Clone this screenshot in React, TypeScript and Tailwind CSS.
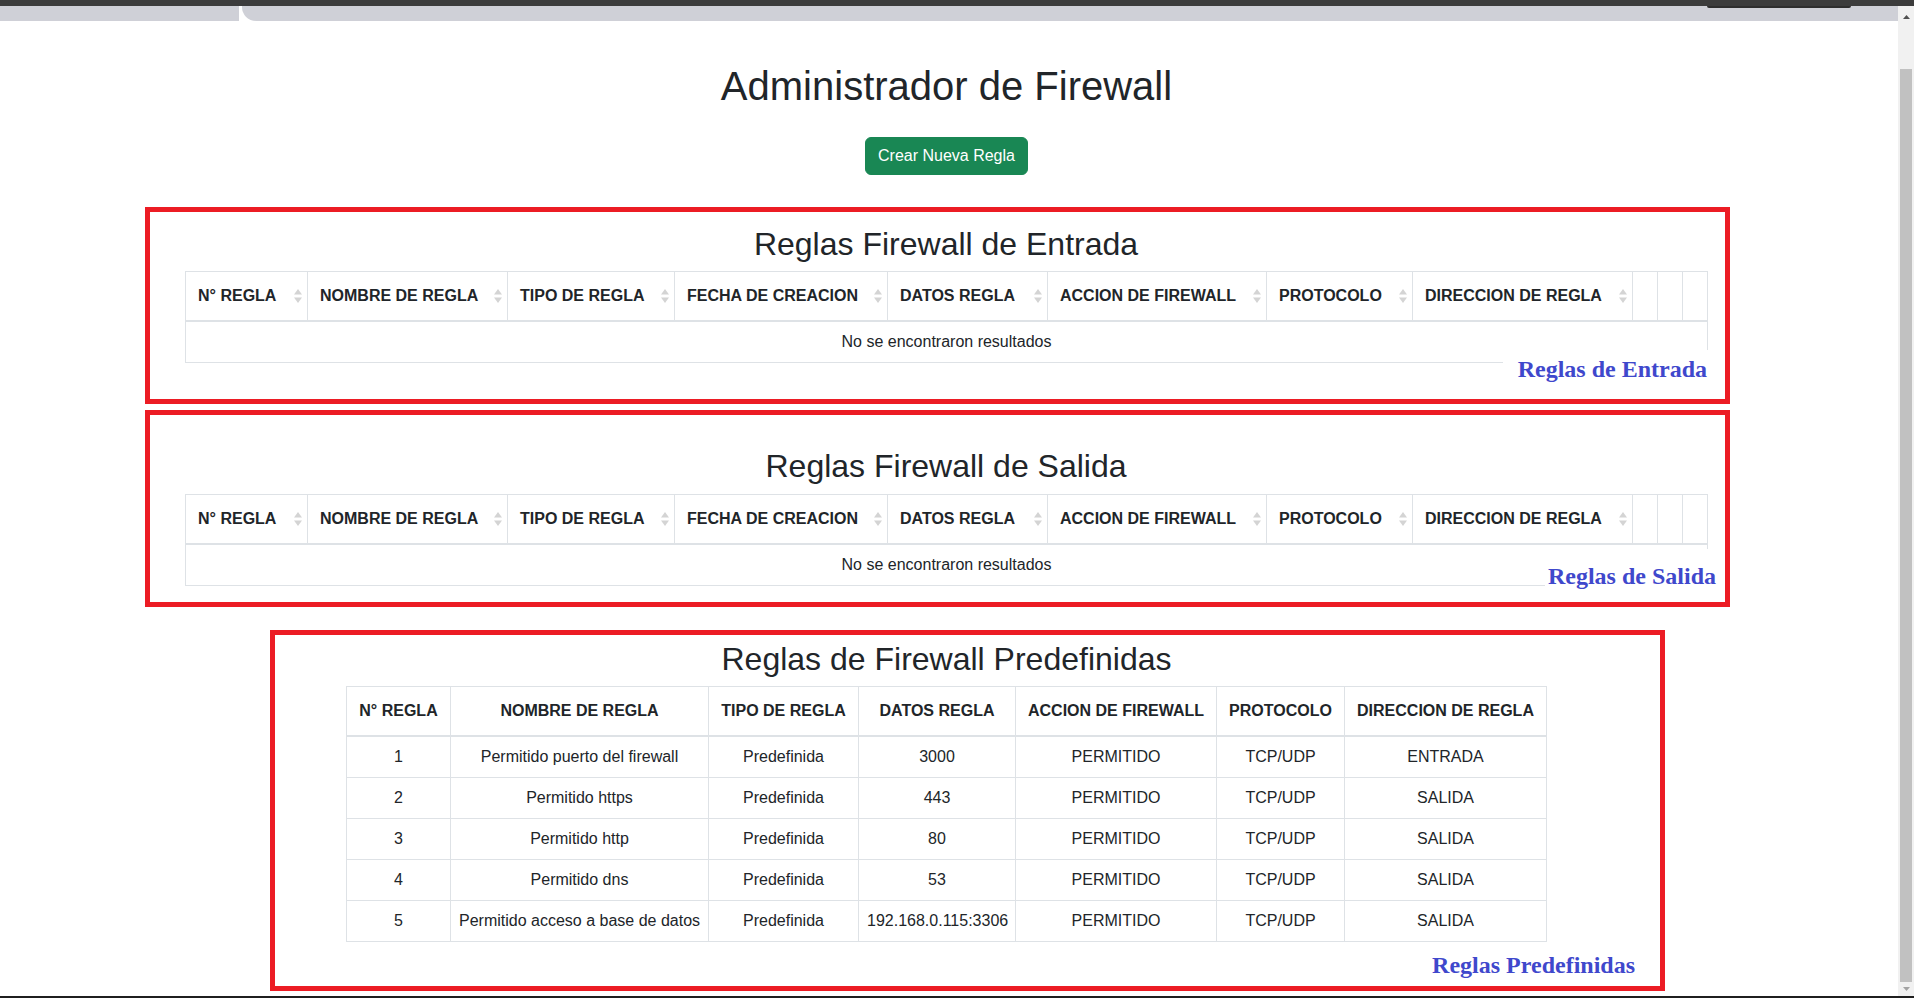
import React from "react";

const sortableHeaders = [
  { label: "N° REGLA", w: "w-[122px]" },
  { label: "NOMBRE DE REGLA", w: "w-[200px]" },
  { label: "TIPO DE REGLA", w: "w-[167px]" },
  { label: "FECHA DE CREACION", w: "w-[213px]" },
  { label: "DATOS REGLA", w: "w-[160px]" },
  { label: "ACCION DE FIREWALL", w: "w-[219px]" },
  { label: "PROTOCOLO", w: "w-[146px]" },
  { label: "DIRECCION DE REGLA", w: "w-[220px]" },
];

const predefHeaders = [
  { label: "N° REGLA", w: "w-[104px]" },
  { label: "NOMBRE DE REGLA", w: "w-[258px]" },
  { label: "TIPO DE REGLA", w: "w-[150px]" },
  { label: "DATOS REGLA", w: "w-[157px]" },
  { label: "ACCION DE FIREWALL", w: "w-[201px]" },
  { label: "PROTOCOLO", w: "w-[128px]" },
  { label: "DIRECCION DE REGLA", w: "w-[202px]" },
];

const predefRules = [
  { id: 1, nombre: "Permitido puerto del firewall", datos: "3000", dir: "ENTRADA" },
  { id: 2, nombre: "Permitido https", datos: "443", dir: "SALIDA" },
  { id: 3, nombre: "Permitido http", datos: "80", dir: "SALIDA" },
  { id: 4, nombre: "Permitido dns", datos: "53", dir: "SALIDA" },
  { id: 5, nombre: "Permitido acceso a base de datos", datos: "192.168.0.115:3306", dir: "SALIDA" },
];

const SortIcon = () => (
  <svg width="8" height="14" viewBox="0 0 8 14" className="shrink-0">
    <path d="M4 0 L8 5.5 H0 Z" fill="#d4d4d4" />
    <path d="M0 8.5 H8 L4 14 Z" fill="#d4d4d4" />
  </svg>
);

// tabla vacia (entrada / salida)
const EmptyRulesTable = () => (
  <table className="w-[1522px] table-fixed border-collapse border border-[#dee2e6] text-[16px] text-[#212529]">
    <colgroup>
      {sortableHeaders.map((h) => (
        <col key={h.label} className={h.w} />
      ))}
      <col className="w-[25px]" />
      <col className="w-[25px]" />
      <col className="w-[25px]" />
    </colgroup>
    <thead>
      <tr>
        {sortableHeaders.map((h) => (
          <th key={h.label} className="border border-b-2 border-[#dee2e6] p-0 text-left font-bold">
            <div className="flex items-center justify-between py-3 pl-3 pr-[5px] leading-6">
              <span className="whitespace-nowrap">{h.label}</span>
              <SortIcon />
            </div>
          </th>
        ))}
        {[0, 1, 2].map((i) => (
          <th key={i} className="border border-b-2 border-[#dee2e6] p-0">
            <div className="py-3 leading-6">&nbsp;</div>
          </th>
        ))}
      </tr>
    </thead>
    <tbody>
      <tr>
        <td colSpan={11} className="border-b border-[#dee2e6] py-2 text-center leading-6">
          No se encontraron resultados
        </td>
      </tr>
    </tbody>
  </table>
);

const PredefTable = () => (
  <table className="w-[1200px] table-fixed border-collapse border border-[#dee2e6] text-[16px] text-[#212529]">
    <colgroup>
      {predefHeaders.map((h) => (
        <col key={h.label} className={h.w} />
      ))}
    </colgroup>
    <thead>
      <tr>
        {predefHeaders.map((h) => (
          <th
            key={h.label}
            className="whitespace-nowrap border border-b-2 border-[#dee2e6] px-2 py-3 text-center font-bold leading-6"
          >
            {h.label}
          </th>
        ))}
      </tr>
    </thead>
    <tbody>
      {predefRules.map((r) => (
        <tr key={r.id}>
          <td className="border border-[#dee2e6] px-2 py-2 text-center leading-6">{r.id}</td>
          <td className="whitespace-nowrap border border-[#dee2e6] px-2 py-2 text-center leading-6">{r.nombre}</td>
          <td className="border border-[#dee2e6] px-2 py-2 text-center leading-6">Predefinida</td>
          <td className="whitespace-nowrap border border-[#dee2e6] px-2 py-2 text-center leading-6">{r.datos}</td>
          <td className="border border-[#dee2e6] px-2 py-2 text-center leading-6">PERMITIDO</td>
          <td className="border border-[#dee2e6] px-2 py-2 text-center leading-6">TCP/UDP</td>
          <td className="border border-[#dee2e6] px-2 py-2 text-center leading-6">{r.dir}</td>
        </tr>
      ))}
    </tbody>
  </table>
);

const Scrollbar = () => (
  <div className="flex w-[16px] shrink-0 flex-col items-center bg-[#f1f1f1]">
    <svg width="7" height="4" viewBox="0 0 7 4" className="mt-[9px]">
      <path d="M3.5 0 L7 4 H0 Z" fill="#505050" />
    </svg>
    <div className="mt-[50px] h-[913px] w-[12px] bg-[#c1c1c1]" />
    <svg width="7" height="4" viewBox="0 0 7 4" className="mt-[5px]">
      <path d="M0 0 H7 L3.5 4 Z" fill="#a3a3a3" />
    </svg>
  </div>
);

export default function App() {
  return (
    <div className="flex h-[998px] w-[1914px] flex-col overflow-hidden bg-white font-['Liberation_Sans',Arial,sans-serif] text-[#212529]">
      <div className="h-[6px] shrink-0 bg-[#3c3c3c]" />
      <div className="flex min-h-0 flex-1">
        <div className="min-w-0 flex-1">
          {/* barra de pestañas */}
          <div className="flex h-[15px]">
            <div className="w-[239px] bg-[#cfd0d7]" />
            <div className="ml-[3px] flex flex-1 rounded-bl-[14px] bg-[#cfd0d7]">
              <div className="ml-[1465px] h-[2px] w-[144px] rounded-b-[3px] bg-[#2e2e2e]" />
            </div>
          </div>

          <main className="pt-[41px]">
            <div className="flex flex-col items-center pr-[5px]">
              <h1 className="text-[40px] leading-[48px] font-normal">Administrador de Firewall</h1>
              <button className="mt-[27px] rounded-[6px] border border-[#198754] bg-[#198754] px-3 py-[6px] text-[16px] leading-6 text-white">
                Crear Nueva Regla
              </button>
            </div>

            {/* Reglas de entrada */}
            <section className="relative ml-[145px] mt-[32px] w-[1585px] border-[5px] border-[#ec1c24] pb-[36px] pl-[35px] pt-[13px]">
              <h2 className="mb-2 w-[1522px] text-center text-[32px] leading-[1.2]">Reglas Firewall de Entrada</h2>
              <EmptyRulesTable />
              <div className="absolute right-[13px] top-[138px] bg-white pb-[2px] pl-[15px] pr-[5px] pt-[5px] font-['Liberation_Serif','Times_New_Roman',serif] text-[24px] font-bold leading-[28px] text-[#3f48cc]">
                Reglas de Entrada
              </div>
            </section>

            {/* Reglas de salida */}
            <section className="relative ml-[145px] mt-[6px] w-[1585px] border-[5px] border-[#ec1c24] pb-[16px] pl-[35px] pt-[32px]">
              <h2 className="mb-2 w-[1522px] text-center text-[32px] leading-[1.2]">Reglas Firewall de Salida</h2>
              <EmptyRulesTable />
              <div className="absolute right-[5px] top-[134px] bg-white pb-[2px] pl-[3px] pr-[4px] pt-[13px] font-['Liberation_Serif','Times_New_Roman',serif] text-[24px] font-bold leading-[28px] text-[#3f48cc]">
                Reglas de Salida
              </div>
            </section>

            {/* Reglas predefinidas */}
            <section className="relative ml-[270px] mt-[23px] w-[1395px] border-[5px] border-[#ec1c24] pb-[44px] pl-[71px] pr-[113px] pt-[5px]">
              <h2 className="mb-2 text-center text-[32px] leading-[1.2]">Reglas de Firewall Predefinidas</h2>
              <PredefTable />
              <div className="absolute right-[25px] top-[316px] font-['Liberation_Serif','Times_New_Roman',serif] text-[24px] font-bold leading-[28px] text-[#3f48cc]">
                Reglas Predefinidas
              </div>
            </section>
          </main>
        </div>
        <Scrollbar />
      </div>
      <div className="h-[2px] shrink-0 bg-[#1f1f1f]" />
    </div>
  );
}
